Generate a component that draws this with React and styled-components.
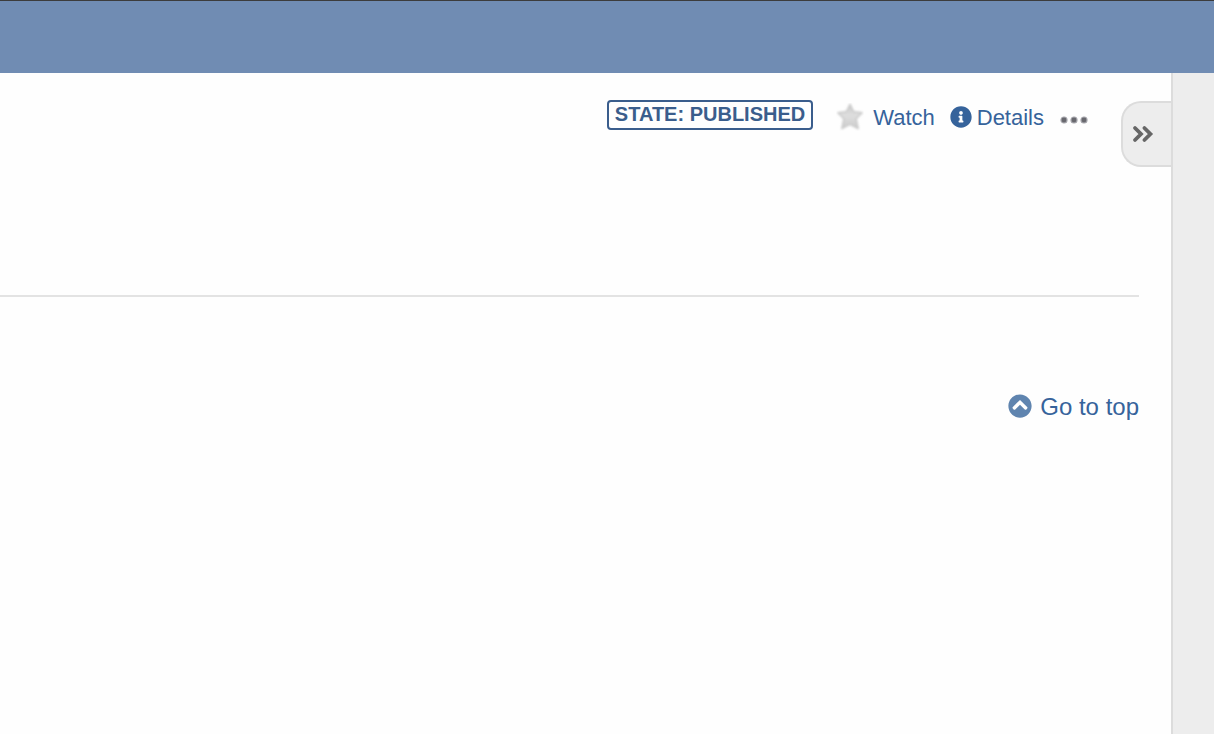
import React from "react";
import styled, { createGlobalStyle } from "styled-components";
import { FaInfoCircle, FaChevronCircleUp } from "react-icons/fa";

const GlobalStyle = createGlobalStyle`
  *, *::before, *::after { box-sizing: border-box; }
  body {
    margin: 0;
    background: #fefefe;
    font-family: "Liberation Sans", Arial, sans-serif;
  }
`;

const Page = styled.div`
  display: flex;
  flex-direction: column;
  min-height: 100vh;
`;

const Banner = styled.header`
  height: 73px;
  flex: none;
  border-top: 1px solid #3c3c3c;
  background: #708cb3;
`;

const Columns = styled.div`
  display: flex;
  flex: 1;
`;

const Main = styled.main`
  position: relative;
  flex: 1;
  padding: 24px 32px 32px 0;
`;

const Toolbar = styled.div`
  display: flex;
  justify-content: flex-end;
  align-items: center;
  height: 42px;
  padding-right: 50px;
`;

const StateBadge = styled.span`
  height: 30px;
  margin: 0 23px 6px 0;
  padding: 0 6px;
  border: 2px solid #3a5d8c;
  border-radius: 4px;
  color: #3a5d8c;
  font-size: 20px;
  font-weight: bold;
  line-height: 25px;
  white-space: nowrap;
`;

const TextLink = styled.a`
  display: inline-flex;
  align-items: center;
  gap: ${(p) => p.$gap}px;
  color: #36639b;
  font-size: ${(p) => p.$size}px;
  line-height: 28px;
  text-decoration: none;
  white-space: nowrap;

  svg {
    flex: none;
    margin-bottom: 2px;
    color: ${(p) => p.$icon};
  }
`;

const Actions = styled.nav`
  display: flex;
  align-items: center;
  gap: 15px;
`;

const PlainButton = styled.button`
  display: flex;
  align-items: center;
  border: 0;
  padding: 4px 0 0;
  background: none;
  cursor: pointer;
`;

const Divider = styled.hr`
  height: 2px;
  margin: 156px 0 96px;
  border: 0;
  background: #e3e3e3;
`;

const TopRow = styled.div`
  display: flex;
  justify-content: flex-end;
`;

const PanelToggle = styled.button`
  position: absolute;
  top: 28px;
  right: 0;
  display: flex;
  align-items: center;
  width: 50px;
  height: 66px;
  padding: 0 0 0 8px;
  border: 2px solid #dcdcdc;
  border-right: 0;
  border-radius: 20px 0 0 20px;
  background: #ededed;
  color: #666;
  cursor: pointer;
`;

const SidePanel = styled.aside`
  width: 43px;
  flex: none;
  border-left: 2px solid #dcdcdc;
  background: #ededed;
`;

function StarIcon() {
  return (
    <svg width="28" height="28" viewBox="0 0 28 28" aria-hidden="true">
      <defs>
        <linearGradient id="starFill" x1="0" y1="0" x2="0" y2="1">
          <stop offset="0" stopColor="#c8c8c8" />
          <stop offset="0.45" stopColor="#dedede" />
          <stop offset="1" stopColor="#cccccc" />
        </linearGradient>
        <filter id="starSoft" x="-20%" y="-20%" width="140%" height="140%">
          <feGaussianBlur stdDeviation="0.8" />
        </filter>
      </defs>
      <path
        d="M14 1.2L17.8 8.8L26.2 9.8L20.2 15.8L22.2 25.6L14 21.4L5.8 25.6L7.8 15.8L1.8 9.8L10.2 8.8Z"
        fill="url(#starFill)"
        stroke="#c8c8c8"
        strokeWidth="1.4"
        strokeLinejoin="round"
        filter="url(#starSoft)"
      />
    </svg>
  );
}

function DotsIcon() {
  return (
    <svg width="30" height="10" viewBox="0 0 30 10" aria-hidden="true">
      {[5, 15, 25].map((cx) => (
        <circle key={cx} cx={cx} cy="5" r="3" fill="#68686e" stroke="#a2a2a8" strokeWidth="1.2" />
      ))}
    </svg>
  );
}

function DoubleChevronIcon() {
  return (
    <svg width="24" height="24" viewBox="0 0 24 24" aria-hidden="true">
      <path
        d="M4 6L10 12L4 18M13.4 6L19.4 12L13.4 18"
        fill="none"
        stroke="currentColor"
        strokeWidth="3.8"
        strokeLinecap="round"
        strokeLinejoin="miter"
      />
    </svg>
  );
}

export default function App() {
  return (
    <Page>
      <GlobalStyle />
      <Banner />
      <Columns>
        <Main>
          <Toolbar>
            <StateBadge>STATE: PUBLISHED</StateBadge>
            <Actions>
              <TextLink href="#watch" $size={22} $gap={9}>
                <StarIcon />
                Watch
              </TextLink>
              <TextLink href="#details" $size={22} $gap={5} $icon="#36639b">
                <FaInfoCircle size={22} aria-hidden="true" />
                Details
              </TextLink>
              <PlainButton type="button" aria-label="More actions">
                <DotsIcon />
              </PlainButton>
            </Actions>
          </Toolbar>
          <Divider />
          <TopRow>
            <TextLink href="#top" $size={24} $gap={8} $icon="#5f84af">
              <FaChevronCircleUp size={24} aria-hidden="true" />
              Go to top
            </TextLink>
          </TopRow>
          <PanelToggle type="button" aria-label="Collapse panel">
            <DoubleChevronIcon />
          </PanelToggle>
        </Main>
        <SidePanel />
      </Columns>
    </Page>
  );
}
